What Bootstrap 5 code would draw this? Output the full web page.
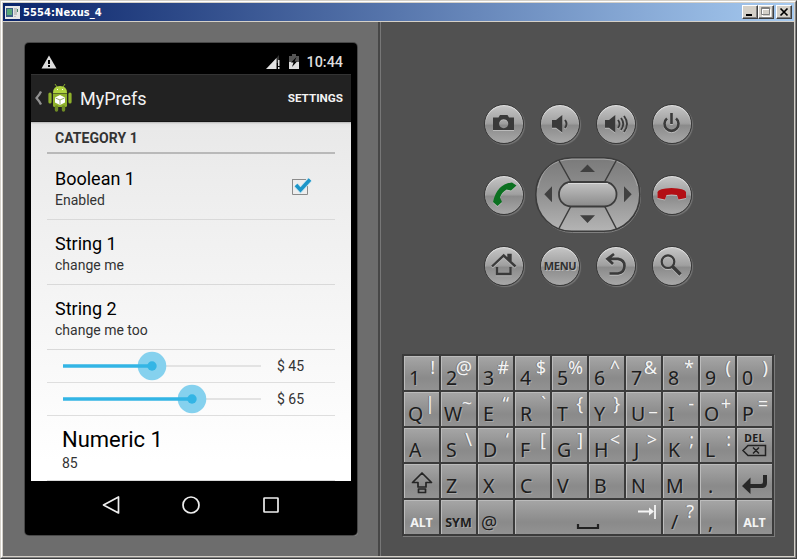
<!DOCTYPE html>
<html lang="en">
<head>
<meta charset="utf-8">
<title>5554:Nexus_4</title>
<link href="https://cdn.jsdelivr.net/npm/bootstrap@5.3.0/dist/css/bootstrap.min.css" rel="stylesheet">
<style>
body{margin:0;background:#d4d0c8;overflow:hidden;line-height:1}
svg{display:block;flex:none}
.win{width:797px;height:559px;border:1px solid;border-color:#d4d0c8 #404040 #404040 #d4d0c8}
.win-in{height:557px;border:1px solid;border-color:#fff #808080 #808080 #fff}
.win-face{height:555px;border:1px solid #d4d0c8}
.titlebar{height:18px;background:linear-gradient(90deg,#0a246a,#a6caf0);padding:0 2px}
.title-text{font:bold 11px/18px "DejaVu Sans Condensed","DejaVu Sans",sans-serif;font-stretch:condensed;color:#fff;margin-left:3px;padding-top:1px;letter-spacing:.1px}
.win-btn{width:16px;height:14px;background:#d4d0c8;border:1px solid;border-color:#fff #404040 #404040 #fff;box-shadow:inset -1px -1px #808080}
.stage{height:535px;border-top:1px solid #d4d0c8}
.left-pane{width:375px;background:#6d6d6d;padding:20px 0 0 22px}
.split{width:3px;background:#474747;border-right:1px solid #777}
.right-pane{background:#515151;padding-top:82px}
.phone{width:332px;height:492px;background:#000;border-radius:4px;box-shadow:0 0 0 1px #484848,1px 1px 0 0 #929292;padding:7px 6px 0;font-family:Roboto,sans-serif;margin:1px 0 0 0}
.statusbar{height:24px;padding:0 8px 0 10px;color:#ddd}
.clock{font-size:14.4px;line-height:24px;font-weight:500;padding-top:1px}
.actionbar{height:48px;background:#222;border-top:1px solid #333;border-bottom:1px solid #151515;color:#f3f3f3;padding:0 8px 0 3px}
.app-title{font-size:18px;line-height:24px;padding-top:2px}
.app-action{font-size:11.7px;font-weight:700;line-height:24px}
.prefs{height:359px;padding:0 16px;background:linear-gradient(#b5b5b5,#e4e4e4 2px,#e9e9e9 7px,#ededed 60px,#fff 340px)}
.cat{height:32px;border-bottom:2px solid #b9b9b9;font-size:14px;font-weight:700;line-height:32px;padding-left:8px;color:#333;letter-spacing:.05px}
.pref{height:65px;border-bottom:1px solid #d9d9d9;padding:12px 21px 0 8px;color:#000}
.pref.first{height:66px;padding-top:13px}
.pref-t{font-size:18px;line-height:24px}
.pref-s{font-size:14px;line-height:18px;color:#333}
.slide{height:33px;border-bottom:1px solid #dedede;font-size:14px;color:#333}
.pref.num{padding:11px 0 0 15px}
.num .pref-t{font-size:22px;line-height:26px}
.num .pref-s{padding-top:1px}
.controls{display:grid;grid-template-columns:repeat(4,40px);gap:31px 16px;margin-left:103px}
.rbtn{width:40px;height:40px;border-radius:50%;background:linear-gradient(#c6c6c6,#a0a0a0 48%,#8b8b8b 54%,#a8a8a8);border:1px solid #383838;box-shadow:1px 1px 1px #777,inset 0 1px 1px #e4e4e4}
.rbtn svg{margin:-1px;filter:drop-shadow(.7px 1px 0 #bbb)}
.menu-l{font:bold 11px/37px "Noto Sans",sans-serif;color:#303030;text-shadow:1px 1px #bbb;letter-spacing:-.3px}
.dpad{grid-column:2/4;justify-self:center;margin:-18px -5px}
.keys{display:grid;grid-template-columns:repeat(10,35px);grid-auto-rows:34px;gap:2px;padding:2px;width:372px;background:#3b3b3b;box-shadow:1px 1px #7b7b7b;margin:68px 0 0 21px;font-family:"Noto Sans",sans-serif}
.key{display:grid;background:linear-gradient(#a6a6a6,#8a8a8a 65%,#929292);box-shadow:inset 1px 1px #bcbcbc;overflow:hidden}
.key>*{grid-area:1/1}
.key b{font-weight:400;font-size:19.5px;line-height:20px;color:#1d1d1d;padding:12px 0 0 5px;text-shadow:1px 1px #a8a8a8}
.key i{font-style:normal;font-size:18px;line-height:20px;color:#f4f4f4;text-align:right;padding:1px 4px 0 0;text-shadow:-1px 0 #777}
.key .word{font-size:12.5px;font-weight:700;padding:13px 0 0;text-align:center}
.key .lit{color:#f4f4f4;text-shadow:none}
.space{grid-column:span 4}
</style>
<script src="https://cdn.jsdelivr.net/npm/bootstrap@5.3.0/dist/js/bootstrap.bundle.min.js"></script>
</head>
<body>
<div class="win"><div class="win-in"><div class="win-face">
<header class="titlebar d-flex align-items-center">
<svg width="15" height="13"><path fill="#e8e8e8" d="M0 0h15v13H0z"/><path fill="#3d5f86" d="M1 2h7v9H1z"/><path fill="#57a679" d="M2 3h5v6H2z"/><path fill="#c4c4c4" d="M9 2h3v7H9zM9 10h2v1H9z"/><path fill="#4b8a69" d="M12 3h1v3h-1z"/></svg>
<span class="title-text me-auto">5554:Nexus_4</span>
<span class="win-btn"><svg width="14" height="12"><path d="M3 8h6v2H3z"/></svg></span>
<span class="win-btn"><svg width="14" height="12"><path fill="none" stroke="#fff" d="M3.500 3.500h8v7h-8z"/><path fill="none" stroke="#808080" d="M2.500 1.500h8v7h-8zM2 2.500h9"/></svg></span>
<span class="win-btn" style="margin-left:2px"><svg width="14" height="12"><path stroke="#000" stroke-width="1.7" d="M3.500 2.500l7 7M10.500 2.500l-7 7"/></svg></span>
</header>
<main class="stage d-flex">
<section class="left-pane">
<div class="phone">
<div class="statusbar d-flex align-items-center">
<svg class="me-auto" width="16" height="14"><path fill="#ddd" d="M8 .5L15.500 13.500H.5z"/><path fill="#000" d="M7 5h2v4H7zM7 10h2v2H7z"/></svg>
<svg width="17" height="16"><path fill="#333" d="M14 1v8H7z"/><path fill="#e2e2e2" d="M1 15L11.500 4v11z"/><path fill="#ddd" d="M13 6h1.500v6H13zM13 13h1.500v2H13z"/></svg>
<svg width="12" height="16" style="margin:0 6px 0 6px"><path fill="#555" d="M1 2h3V0h4v2h3v7H1z"/><path fill="#ddd" d="M1 8h10v7H1z"/><path fill="#000" d="M8.500 3L3 8.500h2.500L4 13l5-5.500H6.500z"/></svg>
<span class="clock">10:44</span>
</div>
<div class="actionbar d-flex align-items-center">
<svg width="10" height="18"><path fill="none" stroke="#929292" stroke-width="2.200" d="M7 2.500Q6 5 2.500 9 6 13 7 15.500"/></svg>
<svg width="26" height="30" viewBox="0 0 26 30" style="margin:0 7px 0 3px"><path stroke="#86a82a" d="M8 1l2 3M18 1l-2 3"/><path fill="#b0d440" d="M6 10Q6 3 13 3t7 7z"/><path fill="#8fb12b" d="M6 10.500h14v12Q20 24 18.500 24h-11Q6 24 6 22.500z"/><path stroke="#8fb12b" stroke-width="3.200" stroke-linecap="round" d="M3 11v8M23 11v8"/><path stroke="#6f8b25" stroke-width="3.400" stroke-linecap="round" d="M9.500 24v3M16.500 24v3"/><path fill="#fff" d="M10 6h1v1h-1zM15 6h1v1h-1zM13 12l5 2.500v5L13 22l-5-2.500v-5z"/><path fill="none" stroke="#9cae73" d="M8.500 15l4.500 2 4.500-2M13 17v4.500"/></svg>
<span class="app-title me-auto">MyPrefs</span>
<span class="app-action">SETTINGS</span>
</div>
<div class="prefs">
<div class="cat">CATEGORY 1</div>
<div class="pref first d-flex justify-content-between"><div><div class="pref-t">Boolean 1</div><div class="pref-s">Enabled</div></div>
<svg width="22" height="22" style="margin-top:7px"><path fill="none" stroke="#8b8b8b" d="M.5 5V20.500H15.500V12M.5 5.500H14"/><path fill="none" stroke="#bfe2ef" stroke-width="5" d="M4 11l4.500 5L18 5.500"/><path fill="none" stroke="#1c95c8" stroke-width="3.500" d="M4 11l4.500 5L18 5.500"/></svg></div>
<div class="pref"><div class="pref-t">String 1</div><div class="pref-s">change me</div></div>
<div class="pref"><div class="pref-t">String 2</div><div class="pref-s">change me too</div></div>
<div class="slide d-flex align-items-center"><svg width="230" height="32"><path stroke="#e3e3e3" stroke-width="2" d="M16 16h198"/><circle cx="105" cy="16" r="14.300" fill="#85d1ee"/><path stroke="#33b5e5" stroke-width="3.600" d="M16 16h89"/><circle cx="105" cy="16" r="4.700" fill="#33b5e5"/></svg><span>$ 45</span></div>
<div class="slide d-flex align-items-center"><svg width="230" height="32"><path stroke="#e3e3e3" stroke-width="2" d="M16 16h198"/><circle cx="145" cy="16" r="14.300" fill="#85d1ee"/><path stroke="#33b5e5" stroke-width="3.600" d="M16 16h129"/><circle cx="145" cy="16" r="4.700" fill="#33b5e5"/></svg><span>$ 65</span></div>
<div class="pref num"><div class="pref-t">Numeric 1</div><div class="pref-s">85</div></div>
</div>
<nav class="d-flex justify-content-center" style="gap:60px;padding-top:14px">
<svg width="20" height="20"><path fill="none" stroke="#eee" stroke-width="1.700" stroke-linejoin="round" d="M17.500 2v16L2.500 10z"/></svg>
<svg width="20" height="20"><circle cx="10" cy="10" r="8" fill="none" stroke="#eee" stroke-width="1.700"/></svg>
<svg width="20" height="20"><rect x="3" y="3" width="14" height="14" rx=".5" fill="none" stroke="#eee" stroke-width="1.700"/></svg>
</nav>
</div>
</section>
<div class="split"></div>
<section class="right-pane flex-grow-1">
<div class="controls">
<div class="rbtn"><svg width="40" height="40"><path fill="#3a3a3a" fill-rule="evenodd" d="M9 13.500h5.500l1.500-2.500h7.500l1.500 2.500h5V26H9zM19.700 15.200a4.500 4.500 0 1 0 .01 0z"/></svg></div>
<div class="rbtn"><svg width="40" height="40"><path fill="#3a3a3a" d="M12 16h4l6.300-5v17.500L16 23.700h-4z"/><path fill="none" stroke="#3a3a3a" stroke-width="2" d="M25 16q3 4 0 8"/></svg></div>
<div class="rbtn"><svg width="40" height="40"><path fill="#3a3a3a" d="M9 16h4l6.300-5v17.500L13 23.700H9z"/><path fill="none" stroke="#3a3a3a" stroke-width="1.900" d="M22 16q3 4 0 8M25 14q4.500 6 0 12M28 12q6 8 0 16"/></svg></div>
<div class="rbtn"><svg width="40" height="40"><path fill="none" stroke="#3a3a3a" stroke-width="2.600" d="M15 14.500a7 7 0 1 0 9 0M19.500 9v11"/></svg></div>

<div class="rbtn"><svg width="40" height="40"><path fill="#0b7020" d="M28 7.500Q13 9 9 27l4.500 4 4.500-4-2-4.500q1.500-5 6.500-8L27 15.500l5.500-5z"/></svg></div>
<svg class="dpad" width="106" height="76" viewBox="0 0 106 76">
<defs><linearGradient id="pad" x2="0" y2="1"><stop stop-color="#7a7a7a"/><stop offset=".5" stop-color="#929292"/><stop offset="1" stop-color="#b4b4b4"/></linearGradient><linearGradient id="pill" x2="0" y2="1"><stop stop-color="#c4c4c4"/><stop offset="1" stop-color="#8a8a8a"/></linearGradient></defs>
<rect x="1.500" y="1.500" width="104" height="74" rx="36" fill="none" stroke="#808080"/>
<rect x=".8" y=".8" width="104" height="73.500" rx="36" fill="url(#pad)" stroke="#3c3c3c" stroke-width="1.600"/>
<path fill="none" stroke="#b0b0b0" stroke-width=".8" d="M3 31Q8 3 37 2.200h32Q96 3 102.500 29"/>
<path stroke="#3c3c3c" stroke-width="1.500" d="M23.700 3L36 25M81.500 3L69.500 25M36 49l-12.300 23M69.500 49l12 23"/>
<rect x="24" y="25" width="57.500" height="24.500" rx="12" fill="url(#pill)" stroke="#3c3c3c" stroke-width="1.800"/>
<path stroke="#ddd" stroke-width=".9" d="M33 26.500h40"/>
<path fill="#404040" d="M52.500 7.500l7.500 7.500H45zM52.500 66l7.500-7.700H45zM9.300 37.300l7.700-8v16zM96.700 37.300l-7.700-8v16z"/></svg>
<div class="rbtn" style="grid-column:4"><svg width="40" height="40"><path fill="#b30f14" d="M5.500 23V17q1-3.500 14-4 13.500.5 14.500 4v6l-7.500 1.500-1.500-4.500q-5.500-1-10.500 0L13 24.500z"/></svg></div>

<div class="rbtn"><svg width="40" height="40"><path fill="none" stroke="#3a3a3a" stroke-width="2.400" d="M8 20.500L19.700 9.500 31.500 20.500M24.500 14V9h2v7M13 21v7h13.500v-7"/></svg></div>
<div class="rbtn d-flex justify-content-center"><span class="menu-l">MENU</span></div>
<div class="rbtn"><svg width="40" height="40"><path fill="none" stroke="#3a3a3a" stroke-width="2.700" d="M11 12.800h11q6.500 1 6.500 7.200 0 6.500-6.500 7.500h-8.500M18 8l-6.500 4.800L17 18"/></svg></div>
<div class="rbtn"><svg width="40" height="40"><circle cx="16" cy="15.700" r="6.300" fill="none" stroke="#3a3a3a" stroke-width="2.200"/><path stroke="#3a3a3a" stroke-width="3.400" d="M20.500 20.500l8 8"/></svg></div>
</div>

<div class="keys">
<div class="key"><b>1</b><i>!</i></div><div class="key"><b>2</b><i>@</i></div><div class="key"><b>3</b><i>#</i></div><div class="key"><b>4</b><i>$</i></div><div class="key"><b>5</b><i>%</i></div><div class="key"><b>6</b><i>^</i></div><div class="key"><b>7</b><i>&amp;</i></div><div class="key"><b>8</b><i>*</i></div><div class="key"><b>9</b><i>(</i></div><div class="key"><b>0</b><i>)</i></div>
<div class="key"><b style="padding-left:4px">Q</b><i>|</i></div><div class="key"><b style="padding-left:3px">W</b><i>~</i></div><div class="key"><b>E</b><i>“</i></div><div class="key"><b>R</b><i>`</i></div><div class="key"><b>T</b><i>{</i></div><div class="key"><b>Y</b><i>}</i></div><div class="key"><b>U</b><i>_</i></div><div class="key"><b>I</b><i>-</i></div><div class="key"><b style="padding-left:4px">O</b><i>+</i></div><div class="key"><b>P</b><i>=</i></div>
<div class="key"><b>A</b></div><div class="key"><b>S</b><i>\</i></div><div class="key"><b>D</b><i>‘</i></div><div class="key"><b>F</b><i>[</i></div><div class="key"><b>G</b><i>]</i></div><div class="key"><b>H</b><i>&lt;</i></div><div class="key"><b style="padding-left:8px">J</b><i>&gt;</i></div><div class="key"><b>K</b><i>;</i></div><div class="key"><b>L</b><i>:</i></div>
<div class="key"><b class="word" style="font-size:10.500px;padding:0;letter-spacing:.4px">DEL</b><svg width="35" height="34"><path fill="none" stroke="#222" stroke-width="1.500" d="M6 22.500l5-5h17.500v10H11zM16 19.500l6 6M22 19.500l-6 6"/></svg></div>
<div class="key"><svg width="35" height="34"><path fill="none" stroke="#252525" stroke-width="1.700" stroke-linejoin="round" d="M18 9l9.500 9.500H22V23h-8v-4.500H8.500zM14.500 25h7v3.500h-7z"/></svg></div><div class="key"><b>Z</b></div><div class="key"><b>X</b></div><div class="key"><b>C</b></div><div class="key"><b>V</b></div><div class="key"><b>B</b></div><div class="key"><b>N</b></div><div class="key"><b style="padding-left:3px">M</b></div><div class="key"><b style="padding-left:8px">.</b></div>
<div class="key"><svg width="35" height="34"><path fill="#282828" d="M5 22l8.500-8.500v6.500H24q2 0 2-2v-7h4v8q0 5-5 5H13.500v6z"/></svg></div>
<div class="key"><b class="word lit">ALT</b></div><div class="key"><b class="word">SYM</b></div><div class="key"><b style="padding-left:3px;font-size:18px">@</b></div>
<div class="key space"><svg width="146" height="34"><path fill="none" stroke="#222" stroke-width="2.200" d="M63 24v4h20v-4"/><path fill="none" stroke="#f4f4f4" stroke-width="1.800" d="M123 11.500h13M140 5v14"/><path fill="#f4f4f4" d="M134 7.500l5 4-5 4z"/></svg></div>
<div class="key"><b style="padding-left:8px">/</b><i>?</i></div><div class="key"><b style="padding-left:8px">,</b></div><div class="key"><b class="word lit">ALT</b></div>
</div>
</section>
</main>
</div></div></div>
</body>
</html>
